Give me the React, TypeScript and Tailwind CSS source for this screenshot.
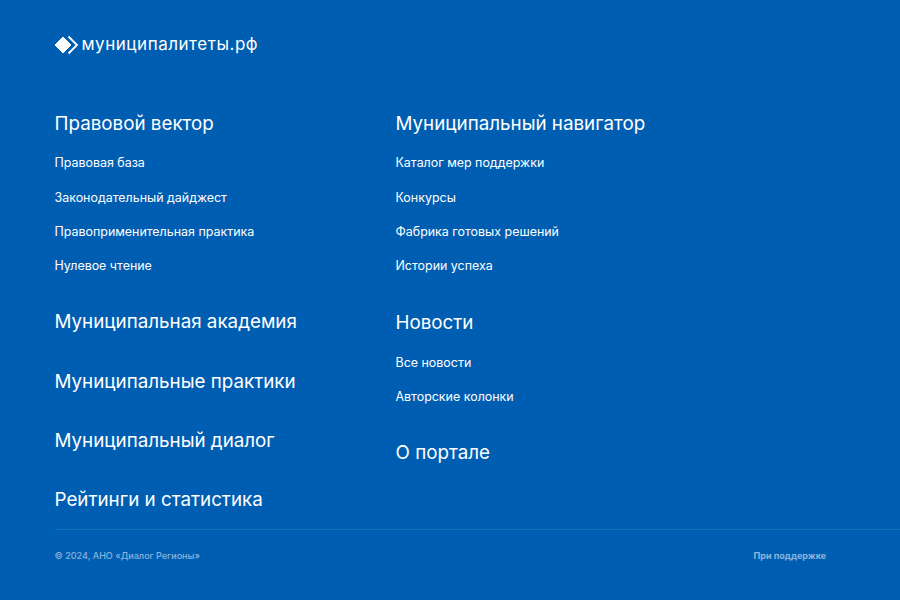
import React from "react";

const Heading: React.FC<{ title: string; className?: string }> = ({ title, className }) => (
    <h3 className={`text-[18.8px] leading-[24px] font-normal text-white ${className ?? ""}`}>{title}</h3>
);

const LinkList: React.FC<{ items: string[]; className?: string }> = ({ items, className }) => (
    <ul className={`flex flex-col gap-[18.4px] ${className ?? "mt-[19.2px]"}`}>
        {items.map((item) => (
            <li key={item} className="text-[12.45px] leading-[16px] text-white">
                {item}
            </li>
        ))}
    </ul>
);

const App: React.FC = () => {
    return (
        <div className="w-[900px] h-[600px] overflow-hidden bg-[#005eb2] font-['Inter',sans-serif]">
            <div className="flex flex-col pl-[54.5px]">
                {/* Логотип */}
                <div className="flex items-start gap-[3px] pt-[33px] h-[112px]">
                    <svg width="24" height="20" viewBox="0 0 24 20" className="mt-[2px]">
                        <path d="M8 2 L16 10 L8 18 L0 10 Z" fill="#fff" stroke="#fff" strokeWidth="1" strokeLinejoin="round" />
                        <path d="M13.5 1.5 L22 10 L13.5 18.5" fill="none" stroke="#fff" strokeWidth="1.8" />
                    </svg>
                    <span className="text-[17px] leading-[22px] tracking-[0.53px] text-white">муниципалитеты.рф</span>
                </div>

                <div className="flex h-[417px]">
                    <div className="w-[341px] shrink-0">
                        <Heading title="Правовой вектор" />
                        <LinkList items={["Правовая база", "Законодательный дайджест", "Правоприменительная практика", "Нулевое чтение"]} />
                        <Heading title="Муниципальная академия" className="mt-[35.8px]" />
                        <Heading title="Муниципальные практики" className="mt-[35.5px]" />
                        <Heading title="Муниципальный диалог" className="mt-[35.5px]" />
                        <Heading title="Рейтинги и статистика" className="mt-[35px]" />
                    </div>
                    <div>
                        <Heading title="Муниципальный навигатор" />
                        <LinkList items={["Каталог мер поддержки", "Конкурсы", "Фабрика готовых решений", "Истории успеха"]} />
                        <Heading title="Новости" className="mt-[36.8px]" />
                        <LinkList items={["Все новости", "Авторские колонки"]} className="mt-[19.8px]" />
                        <Heading title="О портале" className="mt-[35.7px]" />
                    </div>
                </div>

                {/* Подвал */}
                <div className="border-t border-[#1a6fbb] h-[71px] flex pt-[20px]">
                    <span className="w-[699px] shrink-0 text-[9.05px] leading-[12px] font-medium text-[#8ab4dd]">© 2024, АНО «Диалог Регионы»</span>
                    <span className="text-[9.05px] leading-[12px] font-bold text-[#8ab4dd]">При поддержке</span>
                </div>
            </div>
        </div>
    );
};

export default App;
